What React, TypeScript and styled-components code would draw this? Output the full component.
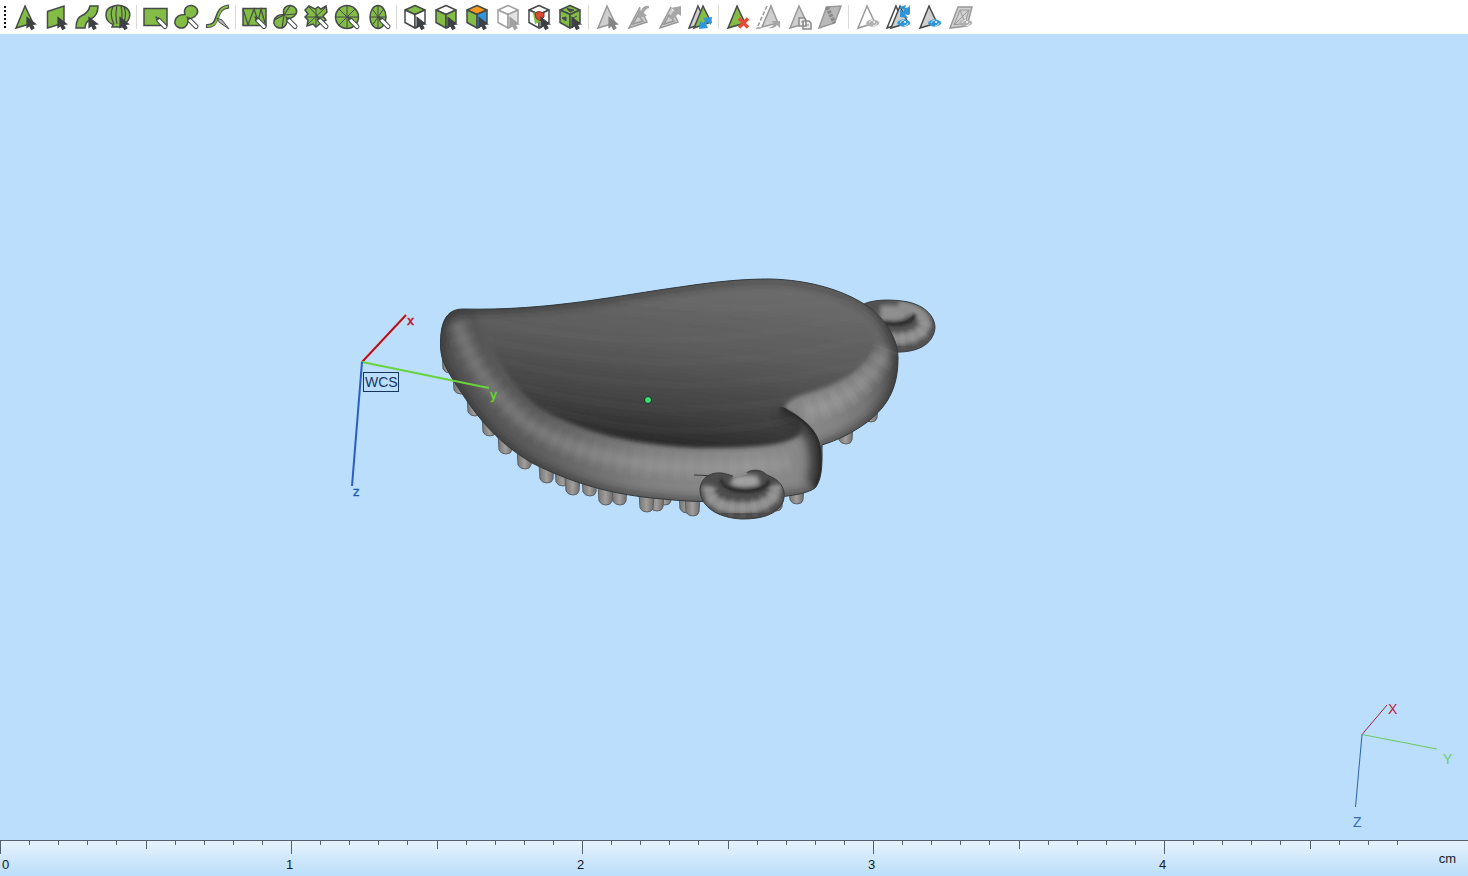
import React, { ReactNode } from "react";
import styled, { createGlobalStyle } from "styled-components";

const GlobalStyle = createGlobalStyle`
  * { box-sizing: border-box; }
  body { margin: 0; background: #badefb; font-family: "Liberation Sans", Arial, sans-serif; }
`;

const Page = styled.div`
  display: flex;
  flex-direction: column;
  min-height: 100vh;
`;

const Toolbar = styled.div`
  display: flex;
  align-items: center;
  height: 34px;
  background: #fff;
  overflow: hidden;
`;

const Grip = styled.div`
  flex: none;
  width: 2px;
  height: 22px;
  margin: 0 4px;
  background: repeating-linear-gradient(#111 0 2px, transparent 2px 4px);
`;

const Separator = styled.div`
  flex: none;
  width: 1px;
  height: 24px;
  margin: 0 3px 0 2px;
  background: #dadada;
`;

const ToolButton = styled.button`
  flex: none;
  width: 31px;
  height: 34px;
  padding: 0;
  border: 0;
  background: none;
  &:hover { background: #e6f2fc; }
  svg { display: block; }
`;

const Viewport = styled.main`
  position: relative;
  flex: 1;
  min-height: 320px;
  overflow: hidden;
`;

const Scene = styled.svg`
  position: absolute;
  inset: 0;
  width: 100%;
  height: 100%;
`;

const Compass = styled.svg`
  position: absolute;
  right: 0;
  bottom: 0;
  width: 128px;
  height: 150px;
`;

const RulerBar = styled.footer`
  display: flex;
  position: relative;
  height: 36px;
  overflow: hidden;
  border-top: 1px solid #51616f;
  background: linear-gradient(#e6f2fd, #bbdefa);
  font-size: 13px;
  line-height: 16px;
  color: #141a20;
`;

const Centimetre = styled.div`
  position: relative;
  flex: none;
  display: grid;
  grid-template-columns: repeat(10, 1fr);
  width: 291px;
`;

const Tick = styled.div<{ $size: number }>`
  height: ${(p) => p.$size}px;
  border-left: 1px solid #51616f;
`;

const TickLabel = styled.span<{ $first: boolean }>`
  position: absolute;
  top: 16px;
  left: ${(p) => (p.$first ? 2 : -5)}px;
`;

const Unit = styled.span`
  position: absolute;
  right: 12px;
  top: 10px;
`;

const GREEN = "#84bd45";
const INK = "#45494a";
const GREY = "#cfcfcf";
const GREYINK = "#989898";
const BLUE = "#2f96dc";

const Cursor = ({ c = "#3d4144" }: { c?: string }) => (
  <path d="M17 17.500V27.500L19.500 25.500L21.500 29.500L24 28L22 24.500L25.500 24Z" fill={c} stroke={c} strokeWidth="1.200" />
);
const Pen = () => (
  <g strokeLinecap="round">
    <path d="M18.500 20L25 26.500" stroke={INK} strokeWidth="5" />
    <path d="M19 20.500L25 26.500" stroke="#fff" strokeWidth="3" />
    <path d="M16 17L18 19" stroke={INK} strokeWidth="1.500" />
  </g>
);
const Eye = ({ c }: { c: string }) => (
  <g transform="translate(21 23)">
    <path d="M-7 0C-4-5 3-5 6.500 0C3 5-4 5-7 0Z" fill={c} />
    <path d="M-4 0Q-3-3 0-3M4 0Q3 3 0 3" fill="none" stroke="#fff" strokeWidth=".8" />
    <circle cx="1" cy="-1" r="1" fill="#fff" />
  </g>
);
const Tri = ({ fill = GREY, stroke = GREYINK }: { fill?: string; stroke?: string }) => (
  <path d="M15 6L23 23L6 28Z" fill={fill} stroke={stroke} strokeWidth="1.500" />
);
const Cube = ({ top = "#fff", left = "#fff", right = "#fff", ink = INK }: { top?: string; left?: string; right?: string; ink?: string }) => (
  <g stroke={ink} strokeWidth="1.500" strokeLinejoin="round">
    <path d="M15 5.500L25 10L15 14.500L5 10Z" fill={top} />
    <path d="M5 10L15 14.500V28L5 22.500Z" fill={left} />
    <path d="M25 10L15 14.500V28L25 22.500Z" fill={right} />
  </g>
);
const Spokes = ({ rx, ry }: { rx: number; ry: number }) => (
  <g fill="none" stroke={INK} strokeWidth="1.500">
    <ellipse cx="15" cy="17" rx={rx} ry={ry} fill={GREEN} />
    <path strokeWidth="1" d={`M15 ${17 - ry}V${17 + ry}M${15 - rx} 17H${15 + rx}M${15 - rx * 0.7} ${17 - ry * 0.7}L${15 + rx * 0.7} ${17 + ry * 0.7}M${15 + rx * 0.7} ${17 - ry * 0.7}L${15 - rx * 0.7} ${17 + ry * 0.7}`} />
  </g>
);
const Blob = () => (
  <path d="M14 14.500C12 9 16 5 20.500 5.500C25 6 28 10 26 14C24 18 20 18 18 19.500C16.500 21 18 24 14 27C9 30 3 26 4 21C5 16 9 14.500 14 14.500Z" fill={GREEN} stroke={INK} strokeWidth="1.500" />
);

type Tool = { name: string; icon: ReactNode };

const groups: Tool[][] = [
  [
    { name: "Select triangle", icon: <><Tri fill={GREEN} stroke={INK} /><Cursor /></> },
    { name: "Select plane", icon: <><path d="M6.500 11.500L23 6V23L6.500 28Z" fill={GREEN} stroke={INK} strokeWidth="1.500" /><Cursor /></> },
    { name: "Select surface", icon: <><path d="M4 28C4 20 6 17 10 15.500C15 13.500 17 10 18 6H26C26 13 23 17 19 19C14 21.500 13.500 24 13 28Z" fill={GREEN} stroke={INK} strokeWidth="1.500" /><Cursor /></> },
    { name: "Select shell", icon: <><path d="M9 27L10 24.500C1 21 1 10 8 7Q15 3.500 22 7C29 11 28 20 21 24L22 27Z" fill={GREEN} stroke={INK} strokeWidth="1.500" /><path d="M11 24Q6 15 10 6.500M14 24Q12 15 14 5.500M18 24Q20 15 18 6M21 22Q24 14 21 7" fill="none" stroke={INK} strokeWidth="1.200" /><Cursor /></> },
  ],
  [
    { name: "Rectangle selection", icon: <><path d="M4 8.500H27V25.500H4Z" fill={GREEN} stroke={INK} strokeWidth="1.500" /><Pen /></> },
    { name: "Freeform selection", icon: <><Blob /><Pen /></> },
    { name: "Brush selection", icon: <><path d="M4 26C20 27 10 8 27 6.500" fill="none" stroke={INK} strokeWidth="4" /><path d="M5 26C20 27 11 9 26 6.500" fill="none" stroke={GREEN} strokeWidth="2" /><path d="M15 18L20 20L27 29L17 22Z" fill="#bbb" stroke={INK} /></> },
  ],
  [
    { name: "Rectangle through", icon: <><path d="M4 8.500H27V25.500H4Z" fill={GREEN} stroke={INK} strokeWidth="1.500" /><path d="M4 9L9 25L15 9L19 21L22 9L26 23" fill="none" stroke={INK} strokeWidth="1.200" /><Pen /></> },
    { name: "Freeform through", icon: <><Blob /><path d="M4 20L14 15L12 28M14 15L26 14M14 15L20 6" fill="none" stroke={INK} strokeWidth="1.200" /><Pen /></> },
    { name: "Polygon through", icon: <><path d="M8 6L14 9L17 7L20 9L25 6L26 12L22 16L25 20L20 23L15 27L12 24L6 26L7 20L4 17L7 14L4 10Z" fill={GREEN} stroke={INK} strokeWidth="1.500" /><path d="M8 7L24 24M25 7L6 25M15 9V26M5 17H23" stroke={INK} strokeWidth="1" /><Pen /></> },
    { name: "Circle through", icon: <><Spokes rx={11.500} ry={11.500} /><Pen /></> },
    { name: "Ellipse through", icon: <><Spokes rx={8} ry={11.500} /><Pen /></> },
  ],
  [
    { name: "Top faces", icon: <><Cube top={GREEN} /><Cursor /></> },
    { name: "Side faces", icon: <><Cube left={GREEN} right={GREEN} /><Cursor /></> },
    { name: "Faces by colour", icon: <><Cube top="#f8991d" left={GREEN} right={BLUE} /><Cursor /></> },
    { name: "Hidden faces", icon: <><Cube ink="#a0a0a0" right="#e2e2e2" /><Cursor c="#a0a0a0" /></> },
    { name: "Inner faces", icon: <><Cube /><path d="M9 13L14 11L16 22L11 24Z" fill={GREEN} /><path d="M11 13L15 11.500L20 13V17L16 21L12 18Z" fill="#dc4932" stroke="#803028" /><Cursor /></> },
    { name: "All faces", icon: <><Cube top={GREEN} left={GREEN} right={GREEN} /><path d="M12 8.500L19 10L15 12ZM7 18L11 17V21ZM18 18L22 16" fill={INK} stroke={INK} strokeWidth="1" /><Cursor /></> },
  ],
  [
    { name: "Grow selection", icon: <><Tri /><Cursor c="#858585" /></> },
    { name: "Shrink", icon: <><path d="M17 7L6 28L24 22L20 14M15 15L10 24L20 21Z" fill={GREY} stroke={GREYINK} strokeWidth="1.500" /><path d="M26 6Q20 5 18 11L15 9V18L24 16L21 13Q22 9 26 8Z" fill="#a6a6a6" /></> },
    { name: "Expand", icon: <><path d="M17 7L6 28L24 22L20 14M15 15L10 24L20 21Z" fill={GREY} stroke={GREYINK} strokeWidth="1.500" /><path d="M15 18L20 10L17 8L27 6V16L24 14L19 19Z" fill="#a6a6a6" /></> },
    { name: "Invert selection", icon: <><path d="M13 6L21 23L4 28Z" fill={GREY} stroke={INK} strokeWidth="1.500" /><path d="M18 6L26 22L9 28Z" fill={GREEN} stroke={INK} strokeWidth="1.500" /><path d="M18 18L27 17L26 25L23 22L21 24L23 28L14 29L15 21L18 23L20 21Z" fill={BLUE} /></> },
  ],
  [
    { name: "Delete selection", icon: <><Tri fill={GREEN} stroke={INK} /><path d="M17 18.500L26 27.500M26 18.500L17 27.500" stroke="#e54a36" strokeWidth="3.500" /></> },
    { name: "Move selection", icon: <><path d="M14 6L4 28H8" fill="none" stroke={GREYINK} strokeWidth="1.500" strokeDasharray="4 2" /><path d="M18 6L25 23L9 27Z" fill={GREY} stroke={GREYINK} strokeWidth="1.500" /><path d="M15 28Q21 27 21 23L18 21H27V28L24 25Q21 29 15 28Z" fill="#a5a5a5" /></> },
    { name: "Copy selection", icon: <><Tri /><path d="M15 18H20L22 20V26H15ZM19 21H25L27 23V29H19Z" fill="#eee" stroke="#8a8a8a" strokeWidth="1.500" /><path d="M17 22H20M21 25H25" stroke="#8a8a8a" /></> },
    { name: "Split selection", icon: <><path d="M11.500 7L26 6L19.500 23L4 28Z" fill="#b9b9b9" stroke={GREYINK} strokeWidth="1.500" /><path d="M12 7L19.500 23" stroke="#898989" strokeWidth="4" strokeDasharray="3 1" /></> },
  ],
  [
    { name: "Hide selection", icon: <><Tri fill="#fff" /><Eye c="#b0b0b0" /></> },
    { name: "Invert visibility", icon: <><path d="M13 6L20 23L4 28Z" fill="#fff" stroke={INK} strokeWidth="1.500" /><path d="M17 6L25 23L8 28Z" fill={GREY} stroke={INK} strokeWidth="1.500" /><path d="M16 7L23 5L22 8Q26 8 27 5V14Q25 16 22 14L25 18L17 17V9L19 12L21 10Z" fill={BLUE} /><Eye c={BLUE} /></> },
    { name: "Show selection", icon: <><Tri stroke={INK} /><Eye c={BLUE} /></> },
    { name: "Show all", icon: <><path d="M13 7H27L22 26L5 28Z" fill="#d0d0d0" stroke={GREYINK} strokeWidth="1.500" /><path d="M15 10H24L20 23L9 25ZM15 10L20 23M24 10L9 25" fill="none" stroke={GREYINK} /><Eye c="#b0b0b0" /></> },
  ],
];

const BODY =
  "M440.500 347C440 324 445 309 463 309C550 311 620 295 680 287C720 281 745 279 770 279C809 280 845 290 870 308C890 324 898 343 898 358C898 385 890 405 866 423C852 433 838 440 822 445C822 460 823 476 816 487C808 495 780 497 760 499C730 502 700 503 663 499C610 495 570 482 532 463C493 440 474 412 455 383C447 370 441 360 440.500 347Z";
const DISH =
  "M474 310C550 311 620 295 680 287C745 277 800 278 838 294C868 308 882 324 876 344C868 366 845 382 812 392C797 396 785 401 785 409C800 418 808 430 795 438C780 446 750 448 705 448C640 447 580 433 538 407C504 382 493 347 474 310Z";
const RIM = "M457 322C470 365 492 392 522 420C562 450 620 466 700 468C740 468 765 467 790 460";
const ARM = "M805 412C840 406 874 380 886 348";
const LOBE_EDGE = "M783 407C803 418 821 430 821.500 454C822 470 823 476 816 487";
const FRONT_RING =
  "M700 489C701 477 711 472 722 473Q731 475 735 477Q745 474 750 471Q760 468 767 475C781 480 787 490 783 502C777 515 761 519 742 519C718 518 700 507 700 489Z";
const BACK_RING =
  "M862 305C872 299 893 299 908 302C926 306 935 317 935 328C933 345 917 353 893 352Z";

const pegs = [
  [450, 367], [461, 388], [475, 410], [490, 430], [506, 448], [525, 463], [547, 477], [563, 480],
  [573, 489], [590, 490], [613, 495], [606, 499], [620, 499], [665, 499], [657, 505], [647, 506],
  [687, 507], [693, 510], [776, 505], [797, 498], [846, 438], [871, 416],
];

const Model = () => (
  <g>
    <defs>
      <linearGradient id="peg"><stop stopColor="#747473" /><stop offset=".5" stopColor="#a19d9b" /><stop offset="1" stopColor="#6b6b6b" /></linearGradient>
      <linearGradient id="body" gradientUnits="userSpaceOnUse" x1="440" y1="0" x2="900" y2="0">
        <stop stopColor="#535353" /><stop offset=".2" stopColor="#5c5c5c" /><stop offset=".45" stopColor="#808080" /><stop offset=".68" stopColor="#8b8b8b" /><stop offset=".85" stopColor="#848484" /><stop offset=".92" stopColor="#777" /><stop offset="1" stopColor="#505050" />
      </linearGradient>
      <linearGradient id="dish" gradientUnits="userSpaceOnUse" x1="715" y1="280" x2="695" y2="450">
        <stop stopColor="#6d6d6d" /><stop offset=".45" stopColor="#5a5a5a" /><stop offset=".8" stopColor="#404040" /><stop offset="1" stopColor="#282828" />
      </linearGradient>
      <filter id="soft1" x="-20%" y="-50%" width="140%" height="200%"><feGaussianBlur stdDeviation="1.500" /></filter>
      <filter id="soft2" x="-20%" y="-20%" width="140%" height="140%"><feGaussianBlur stdDeviation="2" /></filter>
      <filter id="soft4" x="-40%" y="-40%" width="180%" height="180%"><feGaussianBlur stdDeviation="4" /></filter>
      <clipPath id="bodyClip"><path d={BODY} /></clipPath>
      <clipPath id="dishClip"><path d={DISH} /></clipPath>
      <clipPath id="lobeClip"><path d={`${LOBE_EDGE}V510H690V407Z`} /></clipPath>
      <clipPath id="frontRingClip"><path d={FRONT_RING} /></clipPath>
      <clipPath id="backRingClip"><path d={BACK_RING} /></clipPath>
    </defs>

    {pegs.map(([x, y]) => (
      <path key={x} d={`M${x - 8} ${y - 14}L${x - 7} ${y + 2}Q${x - 5} ${y + 6} ${x} ${y + 6}Q${x + 5} ${y + 6} ${x + 6} ${y + 2}L${x + 7} ${y - 14}Z`} fill="url(#peg)" stroke="#5b6063" />
    ))}

    <path d={BACK_RING} fill="#525252" />
    <g clipPath="url(#backRingClip)" fill="none">
      <path d="M890 339C912 340 925 333 925 323C924 314 912 308 898 306" stroke="#8e8e8e" strokeWidth="12" filter="url(#soft2)" />
      <path d="M880 306C896 303 908 308 908 314C906 321 896 322 880 320Z" fill="#8f8f8f" filter="url(#soft2)" />
      <path d="M884 323C898 327 916 322 914 314" stroke="#262626" strokeWidth="3" filter="url(#soft1)" />
      <path d="M886 324C900 325 910 321 913 316" stroke="#333" />
      <path d="M890 340C914 341 929 332 925 318" stroke="#fff" strokeWidth="18" strokeDasharray="5 5" opacity=".05" />
    </g>
    <path d={BACK_RING} fill="none" stroke="#3a3f42" />

    <path d={BODY} fill="url(#body)" />
    <g clipPath="url(#bodyClip)" fill="none">
      <path d={RIM} stroke="#aaa" strokeWidth="14" filter="url(#soft4)" opacity=".35" />
      <path d={ARM} stroke="#aaa" strokeWidth="14" filter="url(#soft4)" opacity=".4" />
      <path d={DISH} fill="url(#dish)" filter="url(#soft2)" />
      <path d={BODY} stroke="#222" strokeWidth="6" filter="url(#soft4)" opacity=".7" />
      <path d={RIM} stroke="#fff" strokeWidth="28" strokeDasharray="7 7" opacity=".025" />
      <path d={ARM} stroke="#fff" strokeWidth="26" strokeDasharray="8 7" opacity=".04" />
      <g clipPath="url(#lobeClip)">
        <path d={LOBE_EDGE} stroke="#303030" strokeWidth="26" filter="url(#soft4)" opacity=".8" />
        <path d={LOBE_EDGE} stroke="#222" strokeWidth="5" filter="url(#soft2)" />
        <path d="M768 460Q792 455 803 441" stroke="#8a8a8a" strokeWidth="6" filter="url(#soft4)" opacity=".7" />
      </g>
    </g>
    <g clipPath="url(#dishClip)" fill="none" stroke="#8a8a8a" strokeWidth="7" opacity=".05">
      <path d="M480 318Q675 367 885 308M480 337Q675 390 885 333M490 357Q680 413 880 358M510 383Q680 433 850 386M545 408Q690 452 820 412M620 300Q735 318 860 299" />
    </g>
    <path d={BODY} fill="none" stroke="#34393c" />

    <path d="M694 475L720 476" stroke="#373737" />
    <path d={FRONT_RING} fill="#4c4c4c" />
    <g clipPath="url(#frontRingClip)" fill="none">
      <path d="M709 486C707 503 722 508 744 508C765 507 778 498 775 485" stroke="#8f8f8f" strokeWidth="12" filter="url(#soft2)" />
      <path d="M733 477Q745 473 758 476L760 485Q745 490 730 485Z" fill="#a0a0a0" filter="url(#soft2)" />
      <path d="M721 479C722 495 767 496 769 480" stroke="#252525" strokeWidth="3" filter="url(#soft1)" />
      <path d="M725 487C735 492 755 492 764 486" stroke="#303030" />
      <path d="M709 486C707 503 722 508 744 508C765 507 778 498 775 485" stroke="#fff" strokeWidth="20" strokeDasharray="5 6" opacity=".05" />
    </g>
    <path d={FRONT_RING} fill="none" stroke="#3a3a3a" />
    <path d="M733 477Q741 476 747 473" stroke="#8c8c8c" fill="none" strokeWidth="2" />
  </g>
);

const WorldAxes = () => (
  <g fontFamily='"DejaVu Sans", sans-serif' fontSize="12">
    <path d="M362 362L406 315" stroke="#f7cbd3" strokeWidth="4" opacity=".6" />
    <path d="M362 362L406 315" stroke="#aa1423" strokeWidth="2" />
    <path d="M362 362L489 388" stroke="#68d43c" strokeWidth="2" />
    <path d="M362 362L352 486" stroke="#2d5dc0" strokeWidth="2" />
    <text x="407" y="325" fill="#c2182a" stroke="#c2182a" strokeWidth=".5">x</text>
    <text x="490" y="399" fill="#62d92b" stroke="#62d92b" strokeWidth=".5">y</text>
    <text x="353" y="496" fill="#1d58ad" stroke="#1d58ad" strokeWidth=".4">z</text>
    <rect x="363.500" y="372.500" width="35" height="19" fill="none" stroke="#17345f" />
    <text x="365" y="387" fill="#17345f" fontFamily='"Liberation Sans", Arial, sans-serif' fontSize="14">WCS</text>
    <circle cx="648" cy="400" r="3.500" fill="#3ae275" stroke="#1b2b1b" />
  </g>
);

const cms = [0, 1, 2, 3, 4];

export default function App() {
  return (
    <Page>
      <GlobalStyle />
      <Toolbar role="toolbar" aria-label="Selection tools">
        <Grip />
        {groups.map((group, i) => (
          <React.Fragment key={i}>
            {i > 0 && <Separator />}
            {group.map((tool) => (
              <ToolButton key={tool.name} type="button" aria-label={tool.name}>
                <svg width="31" height="34" viewBox="0 0 31 34" fill="none">{tool.icon}</svg>
              </ToolButton>
            ))}
          </React.Fragment>
        ))}
      </Toolbar>
      <Viewport>
        <Scene viewBox="0 34 1468 806" role="img" aria-label="Model view">
          <Model />
          <WorldAxes />
        </Scene>
        <Compass viewBox="1340 690 128 150" fontFamily='"Liberation Sans", Arial, sans-serif' fontSize="14" aria-label="Orientation">
          <path d="M1362 734.500L1387 705" stroke="#9d2247" />
          <path d="M1362 734.500L1437 749" stroke="#69c968" />
          <path d="M1362 734.500L1355.500 807" stroke="#2b62a8" />
          <text x="1388" y="714" fill="#c0203a">X</text>
          <text x="1443" y="764" fill="#6ccc6b">Y</text>
          <text x="1353" y="827" fill="#3568ad">Z</text>
        </Compass>
      </Viewport>
      <RulerBar>
        {cms.map((cm) => (
          <Centimetre key={cm}>
            {Array.from({ length: cm === 4 ? 9 : 10 }, (_, i) => (
              <Tick key={i} $size={i === 0 ? 13 : i === 5 ? 8 : 4} />
            ))}
            <TickLabel $first={cm === 0}>{cm}</TickLabel>
          </Centimetre>
        ))}
        <Unit>cm</Unit>
      </RulerBar>
    </Page>
  );
}
